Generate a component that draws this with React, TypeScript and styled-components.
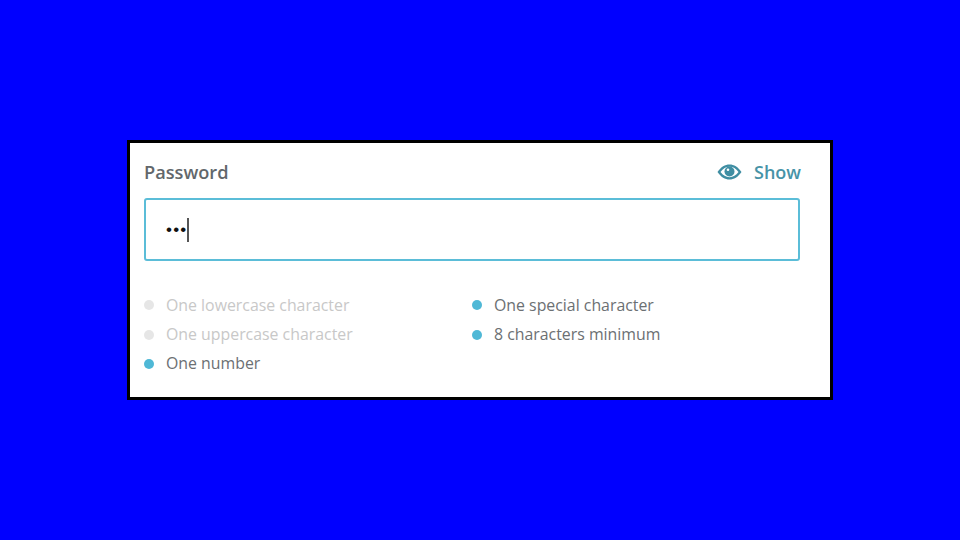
import React from 'react';
import styled, { createGlobalStyle } from 'styled-components';

const GlobalStyle = createGlobalStyle`
  html, body {
    margin: 0;
    padding: 0;
    background: #0000ff;
  }
`

const Page = styled.div`
  width: 960px;
  height: 540px;
  display: flex;
  align-items: flex-start;
  justify-content: flex-start;
  padding: 140px 0 0 127px;
  box-sizing: border-box;
  font-family: "Open Sans", "Noto Sans", sans-serif;
`

const Card = styled.div`
  width: 706px;
  height: 260px;
  box-sizing: border-box;
  background: #ffffff;
  border: 3px solid #000000;
  padding: 17px 29px 0 14px;
`

const Header = styled.div`
  display: flex;
  align-items: center;
  justify-content: space-between;
  height: 24px;
  margin-bottom: 14px;
`

const Label = styled.span`
  font-size: 18.2px;
  font-weight: 600;
  color: #62676b;
`

const ShowToggle = styled.div`
  display: flex;
  align-items: center;
  gap: 12px;
  font-size: 18px;
  font-weight: 600;
  color: #4793a7;
`

const InputBox = styled.div`
  height: 63px;
  box-sizing: border-box;
  border: 2.5px solid #5bbdd8;
  border-radius: 3px;
  display: flex;
  align-items: center;
  padding-left: 20px;
  margin-right: 1px;
`

const Dots = styled.span`
  font-family: "Liberation Sans", sans-serif;
  font-size: 17px;
  letter-spacing: 1.2px;
  color: #111111;
`

const Caret = styled.span`
  width: 2px;
  height: 24px;
  background: #555555;
`

const Rules = styled.div`
  display: grid;
  grid-template-columns: 328px 1fr;
  grid-auto-flow: column;
  grid-template-rows: repeat(3, 29.4px);
  margin-top: 29px;
`

const Rule = styled.div<{ $met: boolean }>`
  display: flex;
  align-items: center;
  gap: 12px;
  font-size: 15.87px;
  color: ${props => props.$met ? '#6c7073' : '#c8c8c8'};
`

const Bullet = styled.span<{ $met: boolean }>`
  width: 10px;
  height: 10px;
  margin-top: 1px;
  border-radius: 50%;
  background: ${props => props.$met ? '#4fb8d6' : '#e6e6e6'};
`

const rules = [
  { text: 'One lowercase character', met: false },
  { text: 'One uppercase character', met: false },
  { text: 'One number', met: true },
  { text: 'One special character', met: true },
  { text: '8 characters minimum', met: true },
]

const EyeIcon = () => (
  <svg width="25" height="16" viewBox="0 0 24 16">
    <path
      d="M0 8C3.500 2.800 7.500 .5 12 .5s8.500 2.300 12 7.500c-3.500 5.200-7.500 7.500-12 7.500S3.500 13.200 0 8zm3 0c2.500 3.300 5.500 5.200 9 5.200s6.500-1.900 9-5.200c-2.500-3.300-5.500-5.200-9-5.200S5.500 4.700 3 8z"
      fill="#3f8ea3"
      fillRule="evenodd"
    />
    <circle cx="12" cy="7.500" r="5" fill="#3f8ea3" />
    <circle cx="10.500" cy="5.800" r="1.300" fill="#ffffff" />
  </svg>
)

export default function App() {
  return (
    <>
      <GlobalStyle />
      <Page>
        <Card>
          <Header>
            <Label>Password</Label>
            <ShowToggle>
              <EyeIcon />
              Show
            </ShowToggle>
          </Header>
          <InputBox>
            <Dots>•••</Dots>
            <Caret />
          </InputBox>
          <Rules>
            {rules.map(rule => (
              <Rule key={rule.text} $met={rule.met}>
                <Bullet $met={rule.met} />
                {rule.text}
              </Rule>
            ))}
          </Rules>
        </Card>
      </Page>
    </>
  )
}
